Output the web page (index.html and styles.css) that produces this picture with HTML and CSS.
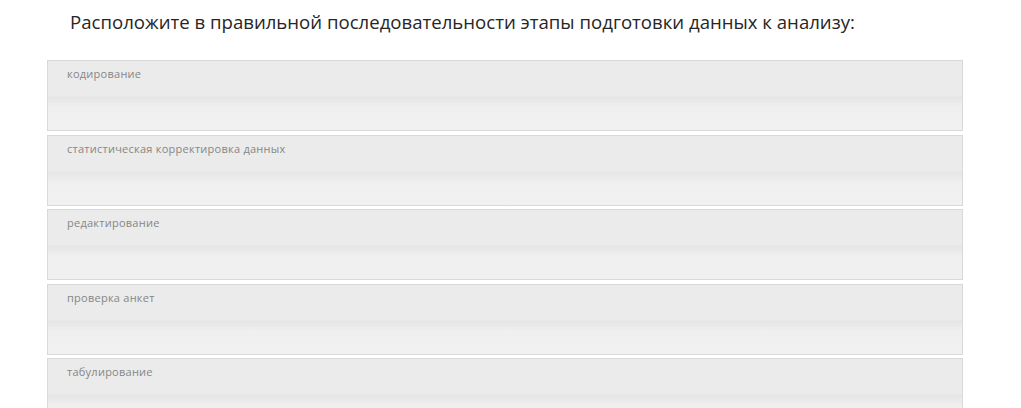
FILE: index.html
```html
<!DOCTYPE html>
<html lang="ru">
<head>
  <meta charset="UTF-8" />
  <meta name="viewport" content="width=device-width, initial-scale=1.0"/>
  <title>Порядок этапов</title>
  <link rel="stylesheet" href="styles.css">
</head>
<body>

  <h2 class="question">Расположите в правильной последовательности этапы подготовки данных к анализу:</h2>

  <ul class="steps">
    <li class="step">кодирование</li>
    <li class="step">статистическая корректировка данных</li>
    <li class="step">редактирование</li>
    <li class="step">проверка анкет</li>
    <li class="step">табулирование</li>
  </ul>

</body>
</html>
```
FILE: styles.css
```css
body {
  margin: 0;
  padding: 0 58px 0 47px;
  font-family: "Open Sans", Arial, sans-serif;
  background: #fff;
}
.question {
  margin: 0;
  padding: 9px 0 0 23px;
  height: 60px;
  box-sizing: border-box;
  font-size: 18.6px;
  font-weight: normal;
  color: #262626;
}
.steps {
  list-style: none;
  margin: 0;
  padding: 0;
}
/* each step: darker label strip on top, soft shade, lighter drop area below */
.step {
  box-sizing: border-box;
  height: 71px;
  margin-bottom: 3.5px;
  padding: 5px 19px;
  border: 1px solid #d9d9d9;
  font-size: 11px;
  letter-spacing: 0.25px;
  color: #868686;
  background: linear-gradient(#ebebeb 0, #ebebeb 35px, #e5e5e5 36px, #efefef 46px, #f1f1f1 100%);
}
```
